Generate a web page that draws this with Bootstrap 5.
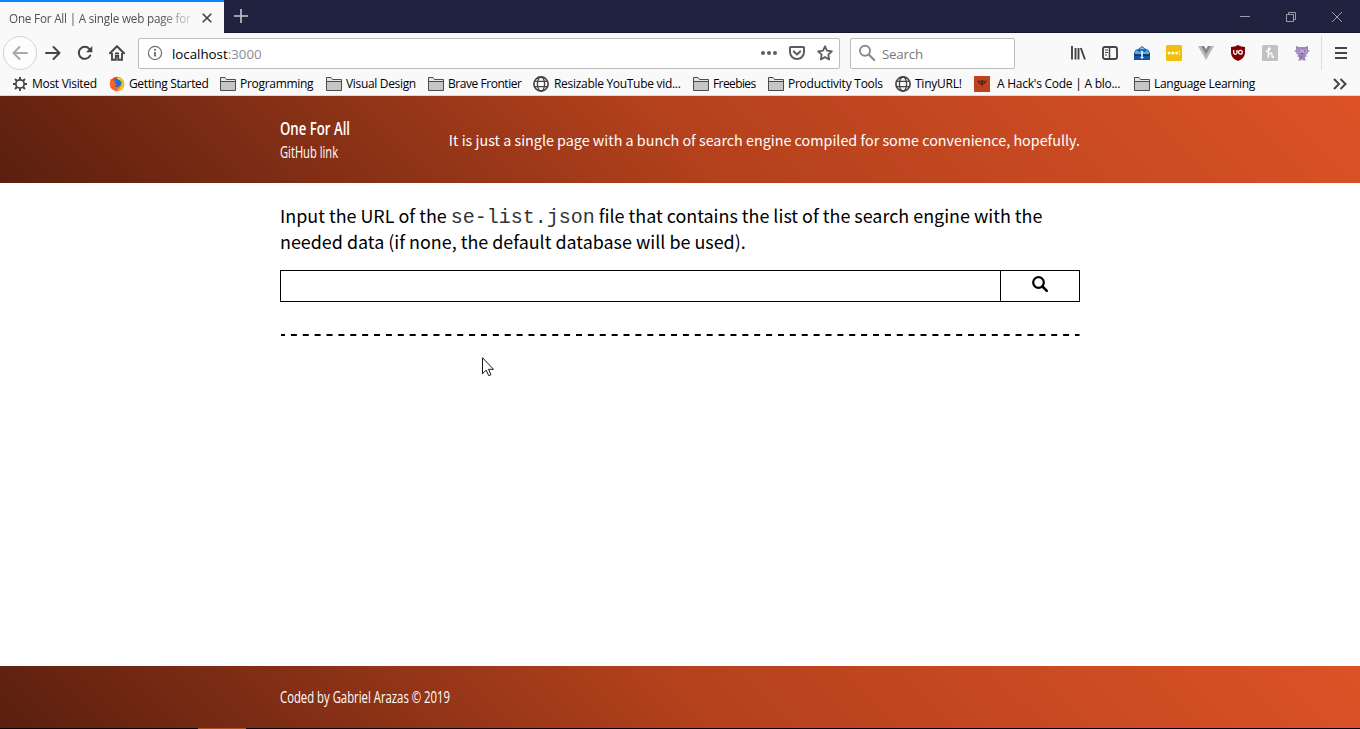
<!DOCTYPE html>
<html lang="en">
<head>
<meta charset="utf-8">
<meta name="viewport" content="width=device-width, initial-scale=1">
<title>One For All | A single web page for search</title>
<link href="https://cdn.jsdelivr.net/npm/bootstrap@5.3.0/dist/css/bootstrap.min.css" rel="stylesheet">
<style>
  body { height: 729px; overflow: hidden; background: #fff; color: #000; font-family: "Open Sans", sans-serif; font-size: 12px; line-height: 16px; }
  svg { display: block; flex: none; overflow: visible; }
  .titlebar { height: 33px; background: #20233f; border-bottom: 1px solid #15172f; }
  .browser-tab { width: 224px; height: 33px; background: #f9f9fa; border-top: 2px solid #0a84ff; padding: 0 12px 0 9px; }
  .tab-label { width: 183px; font-size: 11.7px; letter-spacing: -.2px; color: #4f4f55; -webkit-mask-image: linear-gradient(90deg,#000 150px,transparent 190px); mask-image: linear-gradient(90deg,#000 150px,transparent 190px); }
  .toolbar { height: 40px; background: #f9f9fa; padding-left: 3px; }
  .slot { width: 32px; height: 32px; display: flex; align-items: center; justify-content: center; flex: none; }
  .slot.back-slot { width: 34px; height: 34px; border: 1px solid #d2d2d3; border-radius: 50%; background: #fdfdfd; }
  .url-field, .search-field { height: 31px; background: #fff; border: 1px solid #bcbcbd; border-radius: 2px; font-size: 13.3px; }
  .url-field { width: 702px; margin-left: 5px; padding: 0 6px 0 8px; }
  .search-field { width: 165px; margin-left: 10px; padding-left: 8px; color: #77777b; }
  .url-text { padding: 2px 0 0 1px; }
  .search-text { padding-top: 2px; margin-left: 7px; letter-spacing: -.2px; }
  .port { color: #8c8c90; }
  .menu-slot { height: 34px; width: 39px; border-left: 1px solid #dcdcde; margin-left: 3px; }
  .bookmarks { height: 23px; background: #f9f9fa; border-bottom: 1px solid #dadadb; padding: 0 12px 1px; font-size: 12px; letter-spacing: -.3px; white-space: nowrap; }
  .mark-item { display: flex; align-items: center; flex: none; }
  .mark-item svg { margin-right: 4px; }
  .band { background: linear-gradient(45deg, #5a1f0f 0%, #b3411c 50%, #dd5227 100%); color: #fff; }
  .site-head { height: 87px; }
  .site-foot { height: 62px; }
  .column { width: 800px; margin: 0 auto; }
  .cond { font-family: "Open Sans", sans-serif; fill: #fff; }
  .tagline { font-family: "Noto Sans CJK SC", sans-serif; font-size: 14.34px; font-weight: 400; line-height: 20px; }
  .prompt { font-family: "Noto Sans CJK SC", sans-serif; font-size: 17.92px; line-height: 26px; padding-top: 19px; white-space: nowrap; }
  .prompt code { font: 20px/20px "Liberation Mono", monospace; color: #333; }
  .db-form { height: 32px; border: 1px solid #000; margin-top: 16px; }
  .db-form input { border: 0; outline: 0; background: transparent; }
  .db-form button { width: 79px; border: 0; border-left: 1px solid #000; background: #fff; padding: 0 0 4px; }
  .pointer { position: absolute; left: 482px; top: 357px; }
  .edge { height: 1px; background: #0b0303; }
  .edge div { width: 48px; height: 1px; margin-left: 198px; background: #a95320; }
</style>
</head>
<body class="d-flex flex-column">
<svg width="0" height="0" class="position-absolute">
  <symbol id="folder" viewBox="0 0 16 16"><path d="M.5 14.500V1.500H5l1.500 2h9v11z" fill="#c6c6c6" stroke="#4b4b4d"/><path d="M1 5.500h14" stroke="#4b4b4d"/><path d="M1 2h3.700l1.500 2H15v1H1z" fill="#e6e6e6"/></symbol>
  <symbol id="globe" viewBox="0 0 16 16"><g fill="none" stroke="#454547" stroke-width="1.3"><circle cx="8" cy="8" r="7.1" stroke-width="1.7"/><ellipse cx="8" cy="8" rx="3.6" ry="7"/><path d="M1.8 5.3h12.4M1.8 10.7h12.4"/></g></symbol>
</svg>

<div class="titlebar d-flex align-items-start">
  <div class="browser-tab d-flex align-items-center justify-content-between">
    <div class="tab-label text-nowrap">One For All | A single web page for</div>
    <svg width="10" height="10" viewBox="0 0 10 10"><path d="M.7.7l8.6 8.6M9.3.7L.7 9.3" stroke="#3f3f42" stroke-width="1.6"/></svg>
  </div>
  <svg class="ms-2 mt-2" width="16" height="16" viewBox="0 0 16 16"><path d="M9 1v14M2 8h14" stroke="#c7c7ce" stroke-width="1.6"/></svg>
  <div class="ms-auto d-flex">
    <svg width="138" height="33" viewBox="0 0 138 33" fill="none" stroke="#9d9da8"><path d="M18 16.5h10M64.500 14.500h7v7h-7zM66.500 14v-1.500h7v7H72M110 12l10 10M120 12l-10 10"/></svg>
  </div>
</div>

<div class="toolbar d-flex align-items-center">
  <div class="slot back-slot"><svg width="16" height="16" viewBox="0 0 16 16"><path d="M15 8H1.500M7.500 2L1.500 8l6 6" fill="none" stroke="#aaa" stroke-width="2" stroke-linecap="round" stroke-linejoin="round"/></svg></div>
  <div class="slot"><svg width="16" height="16" viewBox="0 0 16 16"><path d="M1 8h13.500M8.500 2l6 6-6 6" fill="none" stroke="#454547" stroke-width="2" stroke-linecap="round" stroke-linejoin="round"/></svg></div>
  <div class="slot"><svg width="16" height="16" viewBox="0 0 16 16"><path d="M13.200 10.500A6 6 0 1 1 12.300 3.800" fill="none" stroke="#454547" stroke-width="2" stroke-linecap="round"/><path d="M15.300 1v6.300H9z" fill="#454547"/></svg></div>
  <div class="slot"><svg width="16" height="16" viewBox="0 0 16 16"><path d="M1 8.200L8 1.300l7 6.900" fill="none" stroke="#454547" stroke-width="2" stroke-linecap="round" stroke-linejoin="round"/><path d="M3 8v6.800h3.800v-4h2.400v4H13V8" fill="none" stroke="#454547" stroke-width="1.900"/><path d="M6 7.500h4v1.700H6z" fill="#454547"/></svg></div>

  <div class="url-field d-flex align-items-center">
    <svg width="16" height="16" viewBox="0 0 16 16"><circle cx="8" cy="8" r="6.600" fill="none" stroke="#6f6f73" stroke-width="1.200"/><path d="M8 7v4.500M8 4v1.700" stroke="#626266" stroke-width="1.700"/></svg>
    <span class="ms-2 url-text">localhost<span class="port">:3000</span></span>
    <svg class="ms-auto" width="16" height="16" viewBox="0 0 16 16" fill="#5d5d60"><circle cx="2" cy="8" r="2"/><circle cx="8" cy="8" r="2"/><circle cx="14" cy="8" r="2"/></svg>
    <svg class="ms-2 me-1" style="margin-left:12px!important" width="16" height="16" viewBox="0 0 16 16" fill="none" stroke="#5d5d60" stroke-width="2" stroke-linecap="round" stroke-linejoin="round"><path d="M1.600 2h12.800q.6 0 .6.600V7a7 7 0 0 1-14 0V2.600q0-.6.600-.6z"/><path d="M4.800 6.400L8 9.400l3.200-3"/></svg>
    <svg class="ms-2" width="16" height="16" viewBox="0 0 16 16"><path d="M8 1.300l2 4.400 4.900.6-3.600 3.300.9 4.900L8 12.100l-4.200 2.400.9-4.900L1.100 6.300 6 5.700z" fill="none" stroke="#5d5d60" stroke-width="1.800" stroke-linejoin="round"/></svg>
  </div>
  <div class="search-field d-flex align-items-center">
    <svg width="16" height="16" viewBox="0 0 16 16" fill="none" stroke="#8b8b8e"><circle cx="6" cy="5.800" r="5" stroke-width="1.900"/><path d="M9.700 9.500l5.500 5.500" stroke-width="2.200" stroke-linecap="round"/></svg>
    <span class="search-text">Search</span>
  </div>

  <div class="ms-auto d-flex align-items-center">
    <div class="slot"><svg width="16" height="16" viewBox="0 0 16 16" fill="none" stroke="#454547" stroke-width="1.900"><path d="M2 1v13.500M5.500 3v11.500M8.500 3v11.500M10.800 3l4.200 11.500"/></svg></div>
    <div class="slot"><svg width="16" height="16" viewBox="0 0 16 16" fill="none" stroke="#454547"><rect x="1" y="2" width="14" height="12" rx="2" stroke-width="1.900"/><path d="M7.500 2v12" stroke-width="1.500"/><path d="M3 5h3M3 7.500h3M3 10h2"/></svg></div>
    <div class="slot"><svg width="16" height="16" viewBox="0 0 16 16"><path d="M3.500 5L8 1.500 12.500 5z" fill="#84bce9" stroke="#2a6ba9"/><path d="M0 8l2-3.500h12L16 8v7H0z" fill="#1557a0"/><path d="M1 7.500l1.500-2.500 3 2 2-2 3 2 3-2 1.500 2.500v2H1z" fill="#63a7df"/><path d="M0 10h16" stroke="#082f68" stroke-width="1.500"/><path d="M7.200 6h1.600v6h1.300L8 14l-2.100-2h1.300z" fill="#dff4ff"/></svg></div>
    <div class="slot"><svg width="16" height="16" viewBox="0 0 16 16"><rect width="16" height="16" rx="1.300" fill="#f3bf0b"/><g fill="#fff"><circle cx="3" cy="8" r="1.500"/><circle cx="6.800" cy="8" r="1.500"/><circle cx="10.600" cy="8" r="1.500"/></g><path d="M13.500 6v1.300M13.500 8.700V10" stroke="#fff"/></svg></div>
    <div class="slot"><svg width="16" height="16" viewBox="0 0 16 16"><path d="M0 1h6l2 3.500L10 1h6L8 15z" fill="#b7b7b7"/><path d="M3.200 1H6l2 3.500L10 1h2.800L8 9.500z" fill="#848484"/></svg></div>
    <div class="slot"><svg width="16" height="16" viewBox="0 0 16 16"><path d="M8 0q3 2 7 2v6q0 5-7 8-7-3-7-8V2q4 0 7-2z" fill="#800000"/><path d="M3.700 5v2.500q0 1.800 1.600 1.800T7 7.500V5" fill="none" stroke="#fff" stroke-width="1.300"/><circle cx="10.400" cy="7.300" r="1.900" fill="none" stroke="#fff" stroke-width="1.300"/></svg></div>
    <div class="slot"><svg width="16" height="16" viewBox="0 0 16 16"><rect width="16" height="16" rx="1.500" fill="#c1c1c1"/><path d="M4 6.500Q8.500 5 8 3.300 6.500 1.800 6.300 5.500V13M6.300 10q3.200-4 3.700-.5v2q.5 1.800 2 0" fill="none" stroke="#fff" stroke-width="1.400"/></svg></div>
    <div class="slot"><svg width="16" height="16" viewBox="0 0 16 16"><path d="M2 1l3 1h6l3-1v4l2 1-2 1q0 3-4 3h2l1 2-2-.5V14l1 1.500H9L8 14l-1 1.500H4L5 14v-2.500L3 12l1-2h2Q2 10 2 7L0 6l2-1z" fill="#9f86bd"/><path d="M3 4.500h10v3.200H3z" fill="#bda9d0"/><path d="M5 5v2M11 5v2M7 8.500h2M7 11v2" stroke="#6e5390"/></svg></div>
    <div class="slot menu-slot"><svg width="12" height="12" viewBox="0 0 12 12" stroke="#454547" stroke-width="2"><path d="M0 1h12M0 6h12M0 11h12"/></svg></div>
  </div>
</div>

<div class="bookmarks d-flex align-items-center">
  <div class="mark-item" style="width:97px"><svg width="16" height="16" viewBox="0 0 16 16" fill="none" stroke="#454547"><circle cx="8" cy="8" r="4.200" stroke-width="1.800"/><path d="M8 1v2.500M8 12.500V15M1 8h2.500M12.500 8H15M3 3l2 2M11 11l2 2M3 13l2-2M11 5l2-2" stroke-width="1.900"/></svg><span>Most Visited</span></div>
  <div class="mark-item" style="width:111px"><svg width="16" height="16" viewBox="0 0 16 16"><circle cx="8" cy="8" r="7.200" fill="#ff412b"/><path d="M8 15.200A7.200 7.200 0 0 0 14.300 4.500L10.500 1l1 6z" fill="#ffbc20"/><circle cx="8" cy="7" r="4.600" fill="#1972ce"/><path d="M.8 7.500l1-5 2 2L7 4.800 5.500 7l2.300 1.300q-1 2-2.800 1.200 2.800 3.500 6.700-.5-1 5-5.200 5T.8 7.500z" fill="#ff6425"/><path d="M9 .6q2.800 1.900 3 5L10.600 4 8.200 3z" fill="#ffe02d"/></svg><span style="letter-spacing:-.36px">Getting Started</span></div>
  <div class="mark-item" style="width:106px"><svg width="16" height="16"><use href="#folder"/></svg><span>Programming</span></div>
  <div class="mark-item" style="width:102px"><svg width="16" height="16"><use href="#folder"/></svg><span style="letter-spacing:-.33px">Visual Design</span></div>
  <div class="mark-item" style="width:105px"><svg width="16" height="16"><use href="#folder"/></svg><span style="letter-spacing:-.45px">Brave Frontier</span></div>
  <div class="mark-item" style="width:160px"><svg class="me-1" width="16" height="16"><use href="#globe"/></svg><span style="padding-left:1px">Resizable YouTube vid...</span></div>
  <div class="mark-item" style="width:75px"><svg width="16" height="16"><use href="#folder"/></svg><span style="letter-spacing:-.6px">Freebies</span></div>
  <div class="mark-item" style="width:127px"><svg width="16" height="16"><use href="#folder"/></svg><span style="letter-spacing:-.25px">Productivity Tools</span></div>
  <div class="mark-item" style="width:79px"><svg width="16" height="16"><use href="#globe"/></svg><span style="letter-spacing:-.25px">TinyURL!</span></div>
  <div class="mark-item" style="width:160px"><svg width="16" height="16" viewBox="0 0 16 16"><path d="M0 0h16v16H0z" fill="#bd421d"/><path d="M3 4.500l3 .5 2-1 2 1 3-.5-2 3-2 1-1 2-1-2-2-1z" fill="#4d2923"/><path d="M6 6h1v1H6zM9 6h1v1H9z" fill="#8a5145"/></svg><span style="padding-left:3px;letter-spacing:-.25px">A Hack's Code | A blo...</span></div>
  <div class="mark-item"><svg width="16" height="16"><use href="#folder"/></svg><span>Language Learning</span></div>
  <svg class="ms-auto" width="14" height="12" viewBox="0 0 14 12"><path d="M0 1l5 5-5 5M6.500 1l5 5-5 5" fill="none" stroke="#454547" stroke-width="2"/></svg>
</div>

<header class="band site-head">
  <div class="column h-100 d-flex align-items-center justify-content-between">
    <svg width="72" height="87" class="cond"><text x="0" y="39" font-size="17.500" font-weight="600" textLength="70" lengthAdjust="spacingAndGlyphs">One For All</text><text x="0" y="62" font-size="16" font-weight="400" textLength="58" lengthAdjust="spacingAndGlyphs">GitHub link</text></svg>
    <div class="tagline">It is just a single page with a bunch of search engine compiled for some convenience, hopefully.</div>
  </div>
</header>

<main class="flex-grow-1">
  <div class="column">
    <p class="prompt mb-0">Input the URL of the <code>se-list.json</code> file that contains the list of the search engine with the<br>needed data (if none, the default database will be used).</p>
    <form class="db-form d-flex">
      <input class="flex-grow-1" type="text" aria-label="Database URL">
      <button type="button" class="d-flex align-items-center justify-content-center" aria-label="Search"><svg width="16" height="16" viewBox="0 0 16 16" fill="none" stroke="#000"><circle cx="6.500" cy="6.500" r="5.300" stroke-width="2.200"/><path d="M10.500 10.500l4.300 4.300" stroke-width="2.600" stroke-linecap="round"/></svg></button>
    </form>
    <svg style="margin-top:32px" width="800" height="2"><path d="M1 1h798.500" stroke="#000" stroke-width="2" stroke-dasharray="6 5.880" stroke-dashoffset="2"/></svg>
  </div>
</main>

<footer class="band site-foot"><div class="column"><svg width="172" height="62" class="cond"><text x="0" y="37" font-size="16" font-weight="400" textLength="170" lengthAdjust="spacingAndGlyphs">Coded by Gabriel Arazas © 2019</text></svg></div></footer>
<div class="edge"><div></div></div>

<svg class="pointer" width="13" height="20" viewBox="0 0 13 20"><path d="M.5.700v16l3.700-3.500 2.500 5.500 2.300-1-2.500-5.400h5z" fill="#fff" stroke="#16161d"/></svg>
<script src="https://cdn.jsdelivr.net/npm/bootstrap@5.3.0/dist/js/bootstrap.bundle.min.js"></script>
</body>
</html>
